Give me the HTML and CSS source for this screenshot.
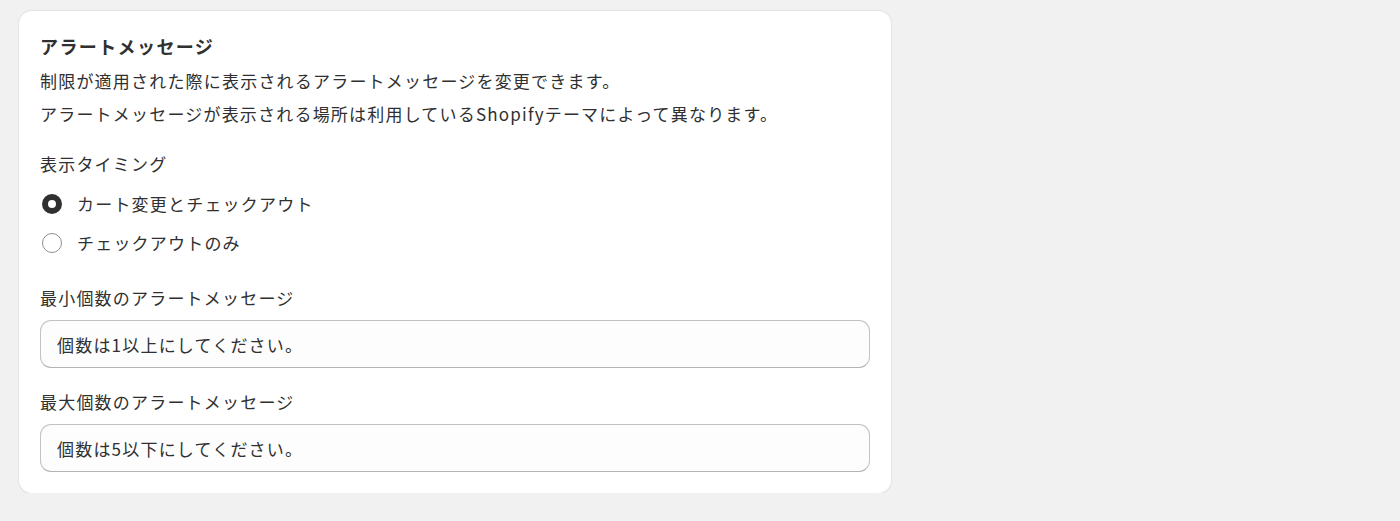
FILE: index.html
```html
<!DOCTYPE html>
<html lang="ja">
<head>
    <meta charset="UTF-8">
    <meta name="viewport" content="width=device-width, initial-scale=1.0">
    <title>アラートメッセージ</title>
    <link rel="stylesheet" href="styles.css">
</head>
<body>
    <div class="page">
        <div class="card">
            <div class="card-header">
                <h2 class="card-title">アラートメッセージ</h2>
                <p class="card-desc">制限が適用された際に表示されるアラートメッセージを変更できます。<br>アラートメッセージが表示される場所は利用しているShopifyテーマによって異なります。</p>
            </div>

            <div class="choice-group">
                <div class="field-label">表示タイミング</div>
                <label class="choice">
                    <input type="radio" name="timing" checked>
                    <span class="radio"></span>
                    <span>カート変更とチェックアウト</span>
                </label>
                <label class="choice">
                    <input type="radio" name="timing">
                    <span class="radio"></span>
                    <span>チェックアウトのみ</span>
                </label>
            </div>

            <div class="field field-first">
                <label class="field-label" for="minMessage">最小個数のアラートメッセージ</label>
                <input class="text-input" id="minMessage" type="text" value="個数は1以上にしてください。">
            </div>

            <div class="field">
                <label class="field-label" for="maxMessage">最大個数のアラートメッセージ</label>
                <input class="text-input" id="maxMessage" type="text" value="個数は5以下にしてください。">
            </div>
        </div>
    </div>
</body>
</html>
```

FILE: styles.css
```css
body {
    margin: 0;
    background-color: #f1f1f1;
    font-family: "Noto Sans CJK JP", "Noto Sans", sans-serif;
    color: #303030;
}
.page {
    padding: 11px 0 0 19px;
}
.card {
    width: 872px;
    box-sizing: border-box;
    padding: 22px 21px 21px;
    background-color: #fff;
    border-radius: 13px;
    box-shadow: 0 0 0 1px #e4e4e4, 0 1px 1px #d2d2d2;
}
.card-header {
    display: flex;
    flex-direction: column;
    gap: 5px;
}
.card-title {
    margin: 0;
    font-size: 18px;
    font-weight: 700;
    line-height: 26px;
    letter-spacing: 1.4px;
}
.card-desc {
    margin: 0;
    font-size: 17px;
    line-height: 33px;
    letter-spacing: 1.2px;
}
.field-label {
    display: block;
    font-size: 17px;
    line-height: 26px;
    letter-spacing: 1.2px;
}
.choice-group {
    margin-top: 21px;
    display: flex;
    flex-direction: column;
    gap: 13px;
}
.choice-group .field-label {
    margin-bottom: 1px;
}
.choice {
    display: flex;
    align-items: center;
    gap: 15px;
    font-size: 17px;
    line-height: 26px;
    letter-spacing: 1.2px;
    cursor: pointer;
}
.choice input {
    display: none;
}
.radio {
    width: 20px;
    height: 20px;
    margin-left: 2px;
    box-sizing: border-box;
    border-radius: 50%;
    border: 1px solid #8f8f8f;
    background-color: #fff;
}
.choice input:checked + .radio {
    border: 6px solid #303030;
}
.field {
    margin-top: 21px;
    display: flex;
    flex-direction: column;
    gap: 9px;
}
.field-first {
    margin-top: 29px;
}
.text-input {
    height: 48px;
    box-sizing: border-box;
    padding: 0 16px;
    border: 1px solid #c2c2c2;
    border-bottom-color: #b3b3b3;
    border-radius: 11px;
    background-color: #fdfdfd;
    font-family: inherit;
    font-size: 17px;
    letter-spacing: 1.2px;
    color: #303030;
}
```
